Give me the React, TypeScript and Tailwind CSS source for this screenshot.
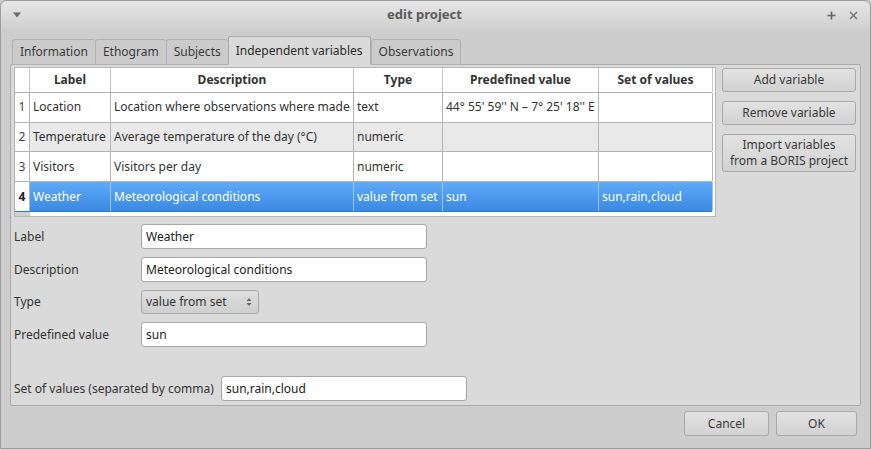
import React from 'react';

const cols = 'grid grid-cols-[15px_81px_243px_89px_156px_114px]';

const rows = [
  { n: '1', label: 'Location', desc: 'Location where observations where made', type: 'text', pre: '44° 55\' 59\'\' N – 7° 25\' 18\'\' E', set: '' },
  { n: '2', label: 'Temperature', desc: 'Average temperature of the day (°C)', type: 'numeric', pre: '', set: '' },
  { n: '3', label: 'Visitors', desc: 'Visitors per day', type: 'numeric', pre: '', set: '' },
  { n: '4', label: 'Weather', desc: 'Meteorological conditions', type: 'value from set', pre: 'sun', set: 'sun,rain,cloud' },
];

function Btn({ children, className = '' }: { children: React.ReactNode; className?: string }) {
  return (
    <div className={`flex items-center justify-center text-center leading-[16px] border border-[#a8a8a8] rounded-[3px] bg-gradient-to-b from-[#e2e2e2] to-[#d2d2d2] text-[#3a3a3a] ${className}`}>
      {children}
    </div>
  );
}

function Field({ value, className = '' }: { value: string; className?: string }) {
  return (
    <div className={`h-[25px] flex items-center px-[4px] bg-white border border-[#a8a8a8] rounded-[3px] text-[#222] ${className}`}>
      {value}
    </div>
  );
}

export default function App() {
  const tabs = ['Information', 'Ethogram', 'Subjects', 'Independent variables', 'Observations'];
  return (
    <div className="w-[871px] h-[449px] overflow-hidden bg-[#cdcdcd] text-[12px] text-[#333]" style={{ fontFamily: '"Noto Sans", "Open Sans", sans-serif' }}>
      <div className="w-full h-full flex flex-col border border-[#9c9c9c] rounded-t-[6px]">
        {/* Title bar */}
        <div className="h-[28px] shrink-0 flex items-center px-[10px] bg-gradient-to-b from-[#e6e6e6] to-[#d0d0d0] rounded-t-[6px]">
          <svg width="10" height="6" viewBox="0 0 10 6" className="ml-[1px]"><path d="M1 0.5 L9 0.5 L5 5.5 Z" fill="#6a6a6a" /></svg>
          <div className="flex-1 text-center font-bold text-[13px] text-[#5b5b5b]">edit project</div>
          <div className="flex items-center gap-[13px] mr-[2px]">
            <svg width="9" height="9" viewBox="0 0 9 9"><path d="M4.5 0.5 V8.5 M0.5 4.5 H8.5" stroke="#666" strokeWidth="1.6" /></svg>
            <svg width="9" height="9" viewBox="0 0 9 9"><path d="M1 1 L8 8 M8 1 L1 8" stroke="#777" strokeWidth="1.5" /></svg>
          </div>
        </div>

        {/* Body */}
        <div className="flex-1 flex flex-col px-[9px]">
          {/* Tabs */}
          <div className="flex items-end h-[36px] pl-[2px] -mb-px relative z-10">
            {tabs.map((t) => {
              const active = t === 'Independent variables';
              return (
                <div
                  key={t}
                  className={
                    active
                      ? 'h-[29px] px-[7px] flex items-center bg-[#dadada] border border-[#aaa] border-b-[#dadada] rounded-t-[3px] text-[#2a2a2a]'
                      : 'h-[26px] px-[7px] flex items-center bg-[#cbcbcb] border border-[#b0b0b0] border-r-0 last:border-r rounded-t-[3px] text-[#3a3a3a]'
                  }
                >
                  {t}
                </div>
              );
            })}
          </div>

          {/* Pane */}
          <div className="h-[342px] bg-[#dadada] border border-[#aaa] rounded-[2px] pl-[3px] pr-[4px] pt-[2px] flex flex-col">
            <div className="flex gap-[6px]">
              {/* Table */}
              <div className="w-[702px] h-[150px] bg-white border border-[#b5b5b5] pr-[3px] flex flex-col">
                <div className={`${cols} h-[25px] font-bold text-[#333] border-b border-[#b0b0b0]`}>
                  <div className="border-r border-[#c8c8c8]" />
                  {['Label', 'Description', 'Type', 'Predefined value', 'Set of values'].map((h) => (
                    <div key={h} className="flex items-center justify-center border-r border-[#c8c8c8]">{h}</div>
                  ))}
                </div>
                {rows.map((r, i) => {
                  const sel = i === 3;
                  const alt = i === 1;
                  const cell = sel
                    ? 'flex items-center px-[3px] whitespace-nowrap overflow-hidden text-white border-r border-[#9ac3ee]'
                    : 'flex items-center px-[3px] whitespace-nowrap overflow-hidden border-r border-[#b4b4b4]';
                  return (
                    <div key={r.n} className={`${cols} h-[30px] border-b ${sel ? 'border-[#2f7bd6]' : 'border-[#b4b4b4]'}`}>
                      <div className={`flex items-center justify-center border-r border-[#b4b4b4] bg-white ${sel ? 'font-bold text-[#222]' : 'text-[#444]'}`}>{r.n}</div>
                      {[r.label, r.desc, r.type, r.pre, r.set].map((v, j) => (
                        <div key={j} className={`${cell} ${sel ? 'bg-gradient-to-b from-[#5fabf8] to-[#3b88e2]' : alt ? 'bg-[#e9e9e9]' : 'bg-white'}`}>{v}</div>
                      ))}
                    </div>
                  );
                })}
                <div className="flex h-[4px]">
                  <div className="w-[15px] bg-[#d0d0d0]" />
                </div>
              </div>

              {/* Side buttons */}
              <div className="w-[134px] flex flex-col gap-[9px] pt-[1px]">
                <Btn className="h-[24px]">Add variable</Btn>
                <Btn className="h-[24px]">Remove variable</Btn>
                <Btn className="h-[38px] leading-[15px]">Import variables<br />from a BORIS project</Btn>
              </div>
            </div>

            {/* Form */}
            <div className="mt-[7px] flex flex-col gap-[8px] w-[413px]">
              <div className="flex items-center">
                <div className="w-[127px]">Label</div>
                <Field value="Weather" className="flex-1" />
              </div>
              <div className="flex items-center">
                <div className="w-[127px]">Description</div>
                <Field value="Meteorological conditions" className="flex-1" />
              </div>
              <div className="flex items-center">
                <div className="w-[127px]">Type</div>
                <div className="w-[118px] h-[24px] flex items-center justify-between pl-[4px] pr-[6px] border border-[#a8a8a8] rounded-[3px] bg-gradient-to-b from-[#dedede] to-[#cfcfcf] text-[#333]">
                  <span>value from set</span>
                  <svg width="6" height="10" viewBox="0 0 6 10"><path d="M0.5 4 L3 1 L5.5 4 Z M0.5 6 L3 9 L5.5 6 Z" fill="#666" /></svg>
                </div>
              </div>
              <div className="flex items-center">
                <div className="w-[127px]">Predefined value</div>
                <Field value="sun" className="flex-1" />
              </div>
            </div>
            <div className="mt-[29px] flex items-center">
              <div className="w-[207px]">Set of values (separated by comma)</div>
              <Field value="sun,rain,cloud" className="w-[246px]" />
            </div>
          </div>

          {/* Footer */}
          <div className="flex justify-end gap-[7px] mt-[5px] pr-[4px]">
            <Btn className="w-[85px] h-[25px]">Cancel</Btn>
            <Btn className="w-[81px] h-[25px]">OK</Btn>
          </div>
        </div>
      </div>
    </div>
  );
}
